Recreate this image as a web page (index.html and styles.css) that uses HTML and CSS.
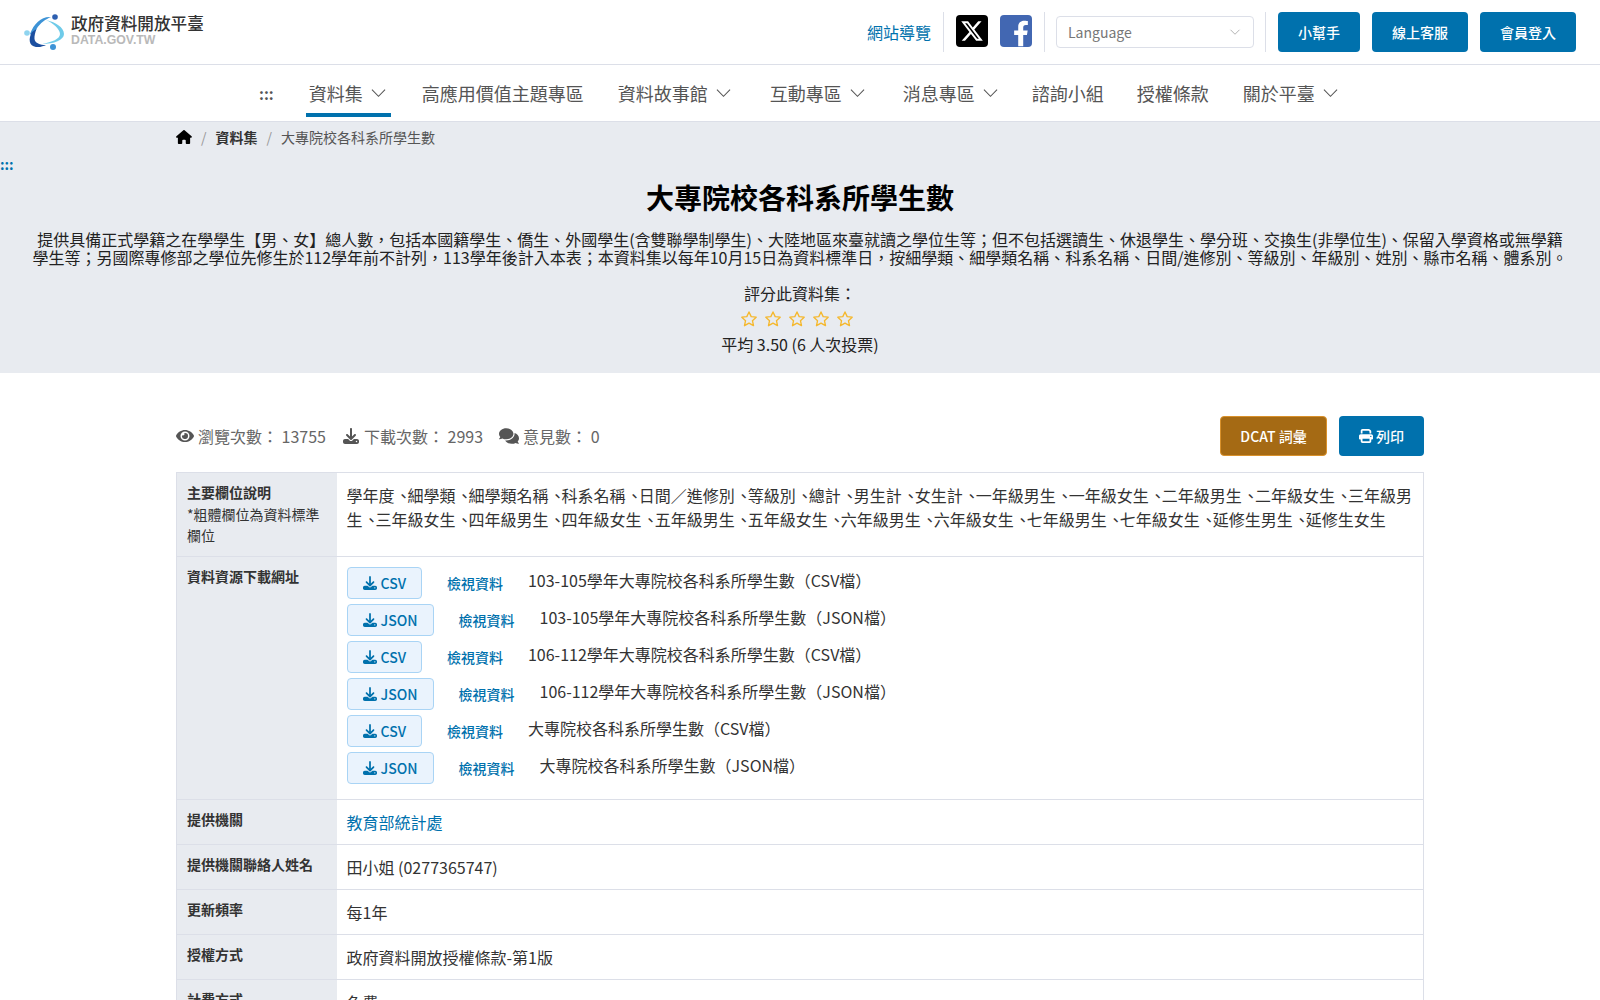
FILE: index.html
```html
<!DOCTYPE html>
<html lang="zh-Hant">
<head>
  <meta charset="UTF-8">
  <title>大專院校各科系所學生數 | 政府資料開放平臺</title>
  <link rel="stylesheet" href="styles.css">
</head>
<body>
  <header class="site-header">
    <a class="logo" href="#">
      <svg class="logo-mark" viewBox="0 0 40 38" aria-hidden="true">
        <path d="M6 20C10 9 18 2 27 3c-5 2-11 6-14.500 12-1.500 2-2.500 4-3.500 7z" fill="#3d93d6"/>
        <path d="M8 18c-4 7-3 14 4 15 4 .5 8-1 10-2-6 0-11-2-11.500-6-.2-3 .5-6 2-10z" fill="#1c4fa0"/>
        <path d="M22 6c9 2 18 7 18 14 0 6-10 10-22 10 10-2 18-5 18-10 0-5-7-11-14-14z" fill="#6fcbe9"/>
        <circle cx="31" cy="3" r="2.800" fill="#2d5fb0"/>
        <circle cx="3" cy="19" r="2.800" fill="#8fd4ef"/>
        <circle cx="29" cy="33" r="3" fill="#3d93d6"/>
      </svg>
      <span class="logo-text">
        <span class="logo-name">政府資料開放平臺</span>
        <span class="logo-domain">DATA.GOV.TW</span>
      </span>
    </a>
    <div class="header-tools">
      <a class="sitemap-link" href="#">網站導覽</a>
      <div class="social">
        <a class="social-tile tile-x" href="#" aria-label="X">
          <svg viewBox="0 0 24 24"><path d="M18.244 2.25h3.308l-7.227 8.26 8.502 11.24H16.17l-5.214-6.817L4.99 21.75H1.68l7.73-8.835L1.254 2.25H8.08l4.713 6.231zm-1.161 17.52h1.833L7.084 4.126H5.117z" fill="#fff"/></svg>
        </a>
        <a class="social-tile tile-fb" href="#" aria-label="Facebook">
          <svg viewBox="0 0 320 512"><path d="M279.14 288l14.22-92.66h-88.91v-60.13c0-25.35 12.42-50.06 52.24-50.06h40.42V6.26S260.43 0 225.36 0c-73.22 0-121.08 44.38-121.08 124.72v70.62H22.89V288h81.39v224h100.17V288z" fill="#fff"/></svg>
        </a>
      </div>
      <div class="language">
        <div class="language-select">
          <span>Language</span>
          <svg class="chevron" viewBox="0 0 16 16"><path d="M2 5l6 6 6-6" fill="none" stroke="currentColor" stroke-width="1"/></svg>
        </div>
      </div>
      <div class="header-buttons">
        <a class="btn btn-primary" href="#">小幫手</a>
        <a class="btn btn-primary" href="#">線上客服</a>
        <a class="btn btn-primary" href="#">會員登入</a>
      </div>
    </div>
  </header>

  <nav class="main-nav">
    <span class="nav-key">:::</span>
    <a class="nav-item has-menu active" href="#">資料集<svg class="chevron" viewBox="0 0 16 16"><path d="M1 5l7 7 7-7" fill="none" stroke="currentColor" stroke-width="1.1"/></svg></a>
    <a class="nav-item" href="#">高應用價值主題專區</a>
    <a class="nav-item has-menu" href="#">資料故事館<svg class="chevron" viewBox="0 0 16 16"><path d="M1 5l7 7 7-7" fill="none" stroke="currentColor" stroke-width="1.1"/></svg></a>
    <a class="nav-item has-menu" href="#">互動專區<svg class="chevron" viewBox="0 0 16 16"><path d="M1 5l7 7 7-7" fill="none" stroke="currentColor" stroke-width="1.1"/></svg></a>
    <a class="nav-item has-menu" href="#">消息專區<svg class="chevron" viewBox="0 0 16 16"><path d="M1 5l7 7 7-7" fill="none" stroke="currentColor" stroke-width="1.1"/></svg></a>
    <a class="nav-item" href="#">諮詢小組</a>
    <a class="nav-item" href="#">授權條款</a>
    <a class="nav-item has-menu" href="#">關於平臺<svg class="chevron" viewBox="0 0 16 16"><path d="M1 5l7 7 7-7" fill="none" stroke="currentColor" stroke-width="1.1"/></svg></a>
  </nav>

  <section class="dataset-hero">
    <ol class="breadcrumb">
      <li><a href="#" aria-label="首頁"><svg class="icon-home" viewBox="0 0 576 512"><path d="M575.8 255.5c0 18-15 32.1-32 32.1h-32l.7 160.2c0 2.7-.2 5.4-.5 8.1V472c0 22.1-17.9 40-40 40H456c-1.1 0-2.2 0-3.3-.1c-1.4 .1-2.8 .1-4.2 .1H416 392c-22.1 0-40-17.9-40-40V448 384c0-17.7-14.3-32-32-32H256c-17.7 0-32 14.3-32 32v64 24c0 22.1-17.9 40-40 40H160 128.1c-1.5 0-3-.1-4.5-.2c-1.2 .1-2.4 .2-3.6 .2H104c-22.1 0-40-17.9-40-40V360c0-.9 0-1.9 .1-2.8V287.6H32c-18 0-32-14-32-32.1c0-9 3-17 10-24L266.4 8c7-7 15-8 22-8s15 2 21 7L564.8 231.5c8 7 12 15 11 24z"/></svg></a></li>
      <li class="crumb-sep">/</li>
      <li><a class="crumb-strong" href="#">資料集</a></li>
      <li class="crumb-sep">/</li>
      <li>大專院校各科系所學生數</li>
    </ol>
    <div class="hero-key">:::</div>
    <h1 class="dataset-title">大專院校各科系所學生數</h1>
    <p class="dataset-desc">提供具備正式學籍之在學學生【男、女】總人數，包括本國籍學生、僑生、外國學生(含雙聯學制學生)、大陸地區來臺就讀之學位生等；但不包括選讀生、休退學生、學分班、交換生(非學位生)、保留入學資格或無學籍學生等；另國際專修部之學位先修生於112學年前不計列，113學年後計入本表；本資料集以每年10月15日為資料標準日，按細學類、細學類名稱、科系名稱、日間/進修別、等級別、年級別、姓別、縣市名稱、體系別。</p>
    <div class="rating">
      <div class="rating-label">評分此資料集：</div>
      <div class="stars">
        <svg viewBox="0 0 24 24"><path d="M12 2.600l2.900 6.200 6.700.8-5 4.600 1.400 6.700-6-3.400-6 3.400 1.400-6.700-5-4.600 6.700-.8z"/></svg>
        <svg viewBox="0 0 24 24"><path d="M12 2.600l2.900 6.200 6.700.8-5 4.600 1.400 6.700-6-3.400-6 3.400 1.400-6.700-5-4.600 6.700-.8z"/></svg>
        <svg viewBox="0 0 24 24"><path d="M12 2.600l2.900 6.200 6.700.8-5 4.600 1.400 6.700-6-3.400-6 3.400 1.400-6.700-5-4.600 6.700-.8z"/></svg>
        <svg viewBox="0 0 24 24"><path d="M12 2.600l2.900 6.200 6.700.8-5 4.600 1.400 6.700-6-3.400-6 3.400 1.400-6.700-5-4.600 6.700-.8z"/></svg>
        <svg viewBox="0 0 24 24"><path d="M12 2.600l2.900 6.200 6.700.8-5 4.600 1.400 6.700-6-3.400-6 3.400 1.400-6.700-5-4.600 6.700-.8z"/></svg>
      </div>
      <div class="rating-average">平均 3.50 (6 人次投票)</div>
    </div>
  </section>

  <main class="dataset-body">
    <div class="meta-row">
      <div class="meta-stats">
        <span class="stat"><svg class="icon-eye" viewBox="0 0 576 512"><path d="M572.52 241.4C518.29 135.59 410.93 64 288 64S57.68 135.64 3.48 241.41a32.35 32.35 0 0 0 0 29.19C57.71 376.41 165.07 448 288 448s230.32-71.64 284.52-177.41a32.35 32.35 0 0 0 0-29.19zM288 400a144 144 0 1 1 144-144 143.93 143.93 0 0 1-144 144zm0-240a95.31 95.31 0 0 0-25.31 3.79 47.85 47.85 0 0 1-66.9 66.9A95.78 95.78 0 1 0 288 160z"/></svg>瀏覽次數： 13755</span>
        <span class="stat"><svg class="icon-dl" viewBox="0 0 512 512"><path d="M288 32c0-17.7-14.3-32-32-32s-32 14.3-32 32V274.7l-73.4-73.4c-12.5-12.5-32.8-12.5-45.3 0s-12.5 32.8 0 45.3l128 128c12.5 12.5 32.8 12.5 45.3 0l128-128c12.5-12.5 12.5-32.8 0-45.3s-32.8-12.5-45.3 0L288 274.7V32zM64 352c-35.3 0-64 28.7-64 64v32c0 35.3 28.7 64 64 64H448c35.3 0 64-28.7 64-64V416c0-35.3-28.7-64-64-64H346.5l-45.3 45.3c-25 25-65.5 25-90.5 0L165.5 352H64zm368 56a24 24 0 1 1 0 48 24 24 0 1 1 0-48z"/></svg>下載次數： 2993</span>
        <span class="stat"><svg class="icon-comments" viewBox="0 0 576 512"><path d="M416 192c0-88.4-93.1-160-208-160S0 103.6 0 192c0 34.3 14.1 65.9 38 92-13.4 30.2-35.5 54.2-35.8 54.5-2.2 2.3-2.8 5.7-1.5 8.7S4.8 352 8 352c36.6 0 66.9-12.3 88.7-25 32.2 15.7 70.3 25 111.3 25 114.9 0 208-71.6 208-160zm122 220c23.9-26 38-57.7 38-92 0-66.9-53.5-124.2-129.3-148.1.9 6.6 1.3 13.3 1.3 20.1 0 105.9-107.7 192-240 192-10.8 0-21.3-.8-31.7-1.9C207.8 439.6 281.8 480 368 480c41 0 79.1-9.2 111.3-25 21.8 12.7 52.1 25 88.7 25 3.2 0 6.1-1.9 7.3-4.8 1.3-2.9.7-6.3-1.5-8.7-.3-.3-22.4-24.2-35.8-54.5z"/></svg>意見數： 0</span>
      </div>
      <div class="meta-actions">
        <a class="btn btn-dcat" href="#">DCAT 詞彙</a>
        <a class="btn btn-primary btn-print" href="#"><svg viewBox="0 0 512 512"><path d="M128 0C92.7 0 64 28.7 64 64v96h64V64H354.7L384 93.3V160h64V93.3c0-17-6.7-33.3-18.7-45.3L400 18.7C388 6.7 371.7 0 354.7 0H128zM384 352v32 64H128V384 368 352H384zm64 32h32c17.7 0 32-14.3 32-32V256c0-35.3-28.7-64-64-64H64c-35.3 0-64 28.7-64 64v96c0 17.7 14.3 32 32 32H64v64c0 35.3 28.7 64 64 64H384c35.3 0 64-28.7 64-64V384zM432 248a24 24 0 1 1 0 48 24 24 0 1 1 0-48z"/></svg>列印</a>
      </div>
    </div>

    <table class="dataset-table">
      <tr>
        <th>主要欄位說明<span class="th-note">*粗體欄位為資料標準欄位</span></th>
        <td><span>學年度</span><span class="sep">、</span><span>細學類</span><span class="sep">、</span><span>細學類名稱</span><span class="sep">、</span><span>科系名稱</span><span class="sep">、</span><span>日間／進修別</span><span class="sep">、</span><span>等級別</span><span class="sep">、</span><span>總計</span><span class="sep">、</span><span>男生計</span><span class="sep">、</span><span>女生計</span><span class="sep">、</span><span>一年級男生</span><span class="sep">、</span><span>一年級女生</span><span class="sep">、</span><span>二年級男生</span><span class="sep">、</span><span>二年級女生</span><span class="sep">、</span><span>三年級男生</span><span class="sep">、</span><span>三年級女生</span><span class="sep">、</span><span>四年級男生</span><span class="sep">、</span><span>四年級女生</span><span class="sep">、</span><span>五年級男生</span><span class="sep">、</span><span>五年級女生</span><span class="sep">、</span><span>六年級男生</span><span class="sep">、</span><span>六年級女生</span><span class="sep">、</span><span>七年級男生</span><span class="sep">、</span><span>七年級女生</span><span class="sep">、</span><span>延修生男生</span><span class="sep">、</span><span>延修生女生</span></td>
      </tr>
      <tr>
        <th>資料資源下載網址</th>
        <td class="resources-cell">
          <div class="resource"><a class="btn-file" href="#"><svg viewBox="0 0 512 512"><path d="M288 32c0-17.7-14.3-32-32-32s-32 14.3-32 32V274.7l-73.4-73.4c-12.5-12.5-32.8-12.5-45.3 0s-12.5 32.8 0 45.3l128 128c12.5 12.5 32.8 12.5 45.3 0l128-128c12.5-12.5 12.5-32.8 0-45.3s-32.8-12.5-45.3 0L288 274.7V32zM64 352c-35.3 0-64 28.7-64 64v32c0 35.3 28.7 64 64 64H448c35.3 0 64-28.7 64-64V416c0-35.3-28.7-64-64-64H346.5l-45.3 45.3c-25 25-65.5 25-90.5 0L165.5 352H64zm368 56a24 24 0 1 1 0 48 24 24 0 1 1 0-48z"/></svg>CSV</a><a class="view-link" href="#">檢視資料</a><span class="resource-name">103-105學年大專院校各科系所學生數（CSV檔）</span></div>
          <div class="resource"><a class="btn-file" href="#"><svg viewBox="0 0 512 512"><path d="M288 32c0-17.7-14.3-32-32-32s-32 14.3-32 32V274.7l-73.4-73.4c-12.5-12.5-32.8-12.5-45.3 0s-12.5 32.8 0 45.3l128 128c12.5 12.5 32.8 12.5 45.3 0l128-128c12.5-12.5 12.5-32.8 0-45.3s-32.8-12.5-45.3 0L288 274.7V32zM64 352c-35.3 0-64 28.7-64 64v32c0 35.3 28.7 64 64 64H448c35.3 0 64-28.7 64-64V416c0-35.3-28.7-64-64-64H346.5l-45.3 45.3c-25 25-65.5 25-90.5 0L165.5 352H64zm368 56a24 24 0 1 1 0 48 24 24 0 1 1 0-48z"/></svg>JSON</a><a class="view-link" href="#">檢視資料</a><span class="resource-name">103-105學年大專院校各科系所學生數（JSON檔）</span></div>
          <div class="resource"><a class="btn-file" href="#"><svg viewBox="0 0 512 512"><path d="M288 32c0-17.7-14.3-32-32-32s-32 14.3-32 32V274.7l-73.4-73.4c-12.5-12.5-32.8-12.5-45.3 0s-12.5 32.8 0 45.3l128 128c12.5 12.5 32.8 12.5 45.3 0l128-128c12.5-12.5 12.5-32.8 0-45.3s-32.8-12.5-45.3 0L288 274.7V32zM64 352c-35.3 0-64 28.7-64 64v32c0 35.3 28.7 64 64 64H448c35.3 0 64-28.7 64-64V416c0-35.3-28.7-64-64-64H346.5l-45.3 45.3c-25 25-65.5 25-90.5 0L165.5 352H64zm368 56a24 24 0 1 1 0 48 24 24 0 1 1 0-48z"/></svg>CSV</a><a class="view-link" href="#">檢視資料</a><span class="resource-name">106-112學年大專院校各科系所學生數（CSV檔）</span></div>
          <div class="resource"><a class="btn-file" href="#"><svg viewBox="0 0 512 512"><path d="M288 32c0-17.7-14.3-32-32-32s-32 14.3-32 32V274.7l-73.4-73.4c-12.5-12.5-32.8-12.5-45.3 0s-12.5 32.8 0 45.3l128 128c12.5 12.5 32.8 12.5 45.3 0l128-128c12.5-12.5 12.5-32.8 0-45.3s-32.8-12.5-45.3 0L288 274.7V32zM64 352c-35.3 0-64 28.7-64 64v32c0 35.3 28.7 64 64 64H448c35.3 0 64-28.7 64-64V416c0-35.3-28.7-64-64-64H346.5l-45.3 45.3c-25 25-65.5 25-90.5 0L165.5 352H64zm368 56a24 24 0 1 1 0 48 24 24 0 1 1 0-48z"/></svg>JSON</a><a class="view-link" href="#">檢視資料</a><span class="resource-name">106-112學年大專院校各科系所學生數（JSON檔）</span></div>
          <div class="resource"><a class="btn-file" href="#"><svg viewBox="0 0 512 512"><path d="M288 32c0-17.7-14.3-32-32-32s-32 14.3-32 32V274.7l-73.4-73.4c-12.5-12.5-32.8-12.5-45.3 0s-12.5 32.8 0 45.3l128 128c12.5 12.5 32.8 12.5 45.3 0l128-128c12.5-12.5 12.5-32.8 0-45.3s-32.8-12.5-45.3 0L288 274.7V32zM64 352c-35.3 0-64 28.7-64 64v32c0 35.3 28.7 64 64 64H448c35.3 0 64-28.7 64-64V416c0-35.3-28.7-64-64-64H346.5l-45.3 45.3c-25 25-65.5 25-90.5 0L165.5 352H64zm368 56a24 24 0 1 1 0 48 24 24 0 1 1 0-48z"/></svg>CSV</a><a class="view-link" href="#">檢視資料</a><span class="resource-name">大專院校各科系所學生數（CSV檔）</span></div>
          <div class="resource"><a class="btn-file" href="#"><svg viewBox="0 0 512 512"><path d="M288 32c0-17.7-14.3-32-32-32s-32 14.3-32 32V274.7l-73.4-73.4c-12.5-12.5-32.8-12.5-45.3 0s-12.5 32.8 0 45.3l128 128c12.5 12.5 32.8 12.5 45.3 0l128-128c12.5-12.5 12.5-32.8 0-45.3s-32.8-12.5-45.3 0L288 274.7V32zM64 352c-35.3 0-64 28.7-64 64v32c0 35.3 28.7 64 64 64H448c35.3 0 64-28.7 64-64V416c0-35.3-28.7-64-64-64H346.5l-45.3 45.3c-25 25-65.5 25-90.5 0L165.5 352H64zm368 56a24 24 0 1 1 0 48 24 24 0 1 1 0-48z"/></svg>JSON</a><a class="view-link" href="#">檢視資料</a><span class="resource-name">大專院校各科系所學生數（JSON檔）</span></div>
        </td>
      </tr>
      <tr><th>提供機關</th><td><a class="agency-link" href="#">教育部統計處</a></td></tr>
      <tr><th>提供機關聯絡人姓名</th><td>田小姐 (0277365747)</td></tr>
      <tr><th>更新頻率</th><td>每1年</td></tr>
      <tr><th>授權方式</th><td>政府資料開放授權條款-第1版</td></tr>
      <tr><th>計費方式</th><td>免費</td></tr>
    </table>
  </main>
</body>
</html>
```

FILE: styles.css
```css
:root {
  --primary: #0071ad;
  --band: #e8ebf0;
  --line: #dcdfe8;
  --text: #333333;
}

* {
  margin: 0;
  padding: 0;
  box-sizing: border-box;
}

body {
  font-family: "Noto Sans CJK TC", "Noto Sans", sans-serif;
  font-size: 16px;
  color: var(--text);
  background: #fff;
}

a {
  color: inherit;
  text-decoration: none;
}

svg {
  display: block;
  flex: none;
}

.btn {
  display: inline-flex;
  align-items: center;
  justify-content: center;
  height: 40px;
  border-radius: 4px;
  font-size: 14px;
  font-weight: 500;
  color: #fff;
}

.btn-primary {
  background: var(--primary);
}

/* top bar */
.site-header {
  display: flex;
  justify-content: space-between;
  align-items: flex-start;
  height: 65px;
  padding: 12px 24px 0 24px;
  border-bottom: 1px solid var(--line);
}

.logo {
  display: flex;
  align-items: flex-start;
  gap: 7px;
  margin-top: 2px;
}

.logo-mark {
  width: 40px;
  height: 38px;
}

.logo-text {
  display: flex;
  flex-direction: column;
  margin-top: -1px;
}

.logo-name {
  font-size: 16.6px;
  line-height: 20px;
  font-weight: 500;
  color: #333;
}

.logo-domain {
  font-family: "Liberation Sans", sans-serif;
  font-size: 12.3px;
  line-height: 14px;
  font-weight: 700;
  color: #b9b9b9;
}

.header-tools {
  display: flex;
  align-items: flex-start;
}

.sitemap-link {
  color: var(--primary);
  line-height: 40px;
  padding-right: 12px;
  border-right: 1px solid var(--line);
  height: 40px;
}

.social {
  display: flex;
  gap: 12px;
  padding: 3px 12px 0 12px;
  height: 40px;
  border-right: 1px solid var(--line);
}

.social-tile {
  display: block;
  width: 32px;
  height: 32px;
  border-radius: 4px;
  overflow: hidden;
}

.tile-x {
  background: #000;
  padding: 4px;
}

.tile-fb {
  background: #4267b2;
  padding: 5px 3px 0 13px;
}

.tile-fb svg {
  width: 16px;
  height: 27px;
}

.language {
  padding: 4px 11px 0 11px;
  height: 40px;
  border-right: 1px solid var(--line);
}

.language-select {
  display: flex;
  align-items: center;
  justify-content: space-between;
  width: 198px;
  height: 32px;
  padding: 0 12px 0 11px;
  border: 1px solid var(--line);
  border-radius: 4px;
  font-size: 14px;
  color: #777;
}

.language-select .chevron {
  width: 12px;
  height: 12px;
  color: #999;
}

.header-buttons {
  display: flex;
  gap: 12px;
  padding-left: 12px;
}

.header-buttons .btn {
  padding: 0 20px;
}

/* main navigation */
.main-nav {
  display: flex;
  align-items: flex-start;
  height: 57px;
  padding-left: 259px;
  border-bottom: 1px solid var(--line);
  font-size: 18px;
  color: #555;
}

.nav-key {
  font-size: 15px;
  font-weight: 700;
  line-height: 58px;
  margin-right: 32px;
  color: #555;
}

.nav-item {
  display: flex;
  align-items: center;
  gap: 8px;
  height: 52px;
  margin-right: 25px;
  padding: 4px 5px 0 3px;
}

.nav-item.has-menu {
  margin-right: 30px;
}

.nav-item .chevron {
  width: 15px;
  height: 15px;
  margin-bottom: 2px;
}

.nav-item.active {
  border-bottom: 4px solid var(--primary);
  padding-top: 8px;
  margin-right: 28px;
}

.nav-item:nth-of-type(2) {
  margin-right: 26px;
}

.nav-item:nth-of-type(3) {
  margin-right: 31px;
}

.nav-item:nth-of-type(5) {
  margin-right: 26px;
}

.nav-item:nth-of-type(7) {
  margin-right: 26px;
}

/* page heading band */
.dataset-hero {
  background: var(--band);
  height: 251px;
  text-align: center;
}

.breadcrumb {
  display: flex;
  align-items: center;
  gap: 8px;
  list-style: none;
  height: 30px;
  padding-left: 176px;
  font-size: 14px;
  color: #555;
}

.crumb-strong {
  font-weight: 700;
  color: #333;
}

.crumb-sep {
  color: #999;
  padding: 0 1px;
}

.icon-home {
  width: 16px;
  height: 14px;
  fill: #000;
}

.hero-key {
  text-align: left;
  font-size: 14px;
  font-weight: 700;
  line-height: 24px;
  color: var(--primary);
}

.dataset-title {
  font-size: 28px;
  line-height: 40px;
  font-weight: 700;
  color: #000;
  margin-top: 1px;
}

.dataset-desc {
  margin-top: 13px;
  padding: 0 32px;
  line-height: 18.4px;
  color: #222;
}

.rating {
  margin-top: 14px;
  line-height: 24px;
  color: #222;
}

.stars {
  display: flex;
  justify-content: center;
  gap: 6px;
  margin: 5px 0 4px;
  padding-right: 6px;
}

.stars svg {
  width: 18px;
  height: 18px;
  fill: none;
  stroke: #f5b82e;
  stroke-width: 1.8;
  stroke-linejoin: round;
}

/* stats row */
.dataset-body {
  padding: 43px 176px 0;
}

.meta-row {
  display: flex;
  justify-content: space-between;
  align-items: center;
}

.meta-stats {
  display: flex;
  gap: 16px;
  color: #666;
}

.stat {
  display: flex;
  align-items: center;
  gap: 4px;
}

.stat svg {
  width: 18px;
  height: 16px;
  fill: #555;
}

.stat .icon-comments {
  width: 20px;
  height: 18px;
}

.meta-actions {
  display: flex;
  gap: 12px;
}

.btn-dcat {
  width: 107px;
  background: #a56a14;
  border: 1px solid #d9912b;
}

.btn-print {
  width: 85px;
  gap: 3px;
}

.btn-print svg {
  width: 14px;
  height: 14px;
  fill: #fff;
}

/* dataset table */
.dataset-table {
  width: 100%;
  margin-top: 16px;
  border-collapse: collapse;
  table-layout: fixed;
  border: 1px solid var(--line);
}

.dataset-table th,
.dataset-table td {
  padding: 10px;
  border-bottom: 1px solid var(--line);
  text-align: left;
  vertical-align: top;
}

.dataset-table th {
  width: 160px;
  padding-top: 9px;
  background: var(--band);
  font-size: 14px;
  line-height: 21px;
  font-weight: 700;
}

.dataset-table td {
  line-height: 24px;
  padding-top: 10px;
}

.th-note {
  display: block;
  margin-top: 1px;
  font-weight: 400;
}

/* the list's commas sit tighter than a full CJK cell */
.sep {
  font-feature-settings: "palt";
  padding-left: 5px;
}

.resources-cell {
  padding-bottom: 15px;
}

.resource {
  display: flex;
  align-items: flex-start;
  height: 37px;
}

.btn-file {
  display: flex;
  align-items: center;
  gap: 4px;
  height: 32px;
  padding: 0 15px;
  background: #eaf3fd;
  border: 1px solid #a9d4f5;
  border-radius: 4px;
  font-size: 14px;
  font-weight: 500;
  color: var(--primary);
}

.btn-file svg {
  width: 14px;
  height: 14px;
  fill: var(--primary);
}

.view-link {
  margin: 6px 25px 0 25px;
  font-size: 14px;
  line-height: 21px;
  font-weight: 500;
  color: var(--primary);
}

.resource-name {
  line-height: 26px;
}

.agency-link {
  color: var(--primary);
}
```
